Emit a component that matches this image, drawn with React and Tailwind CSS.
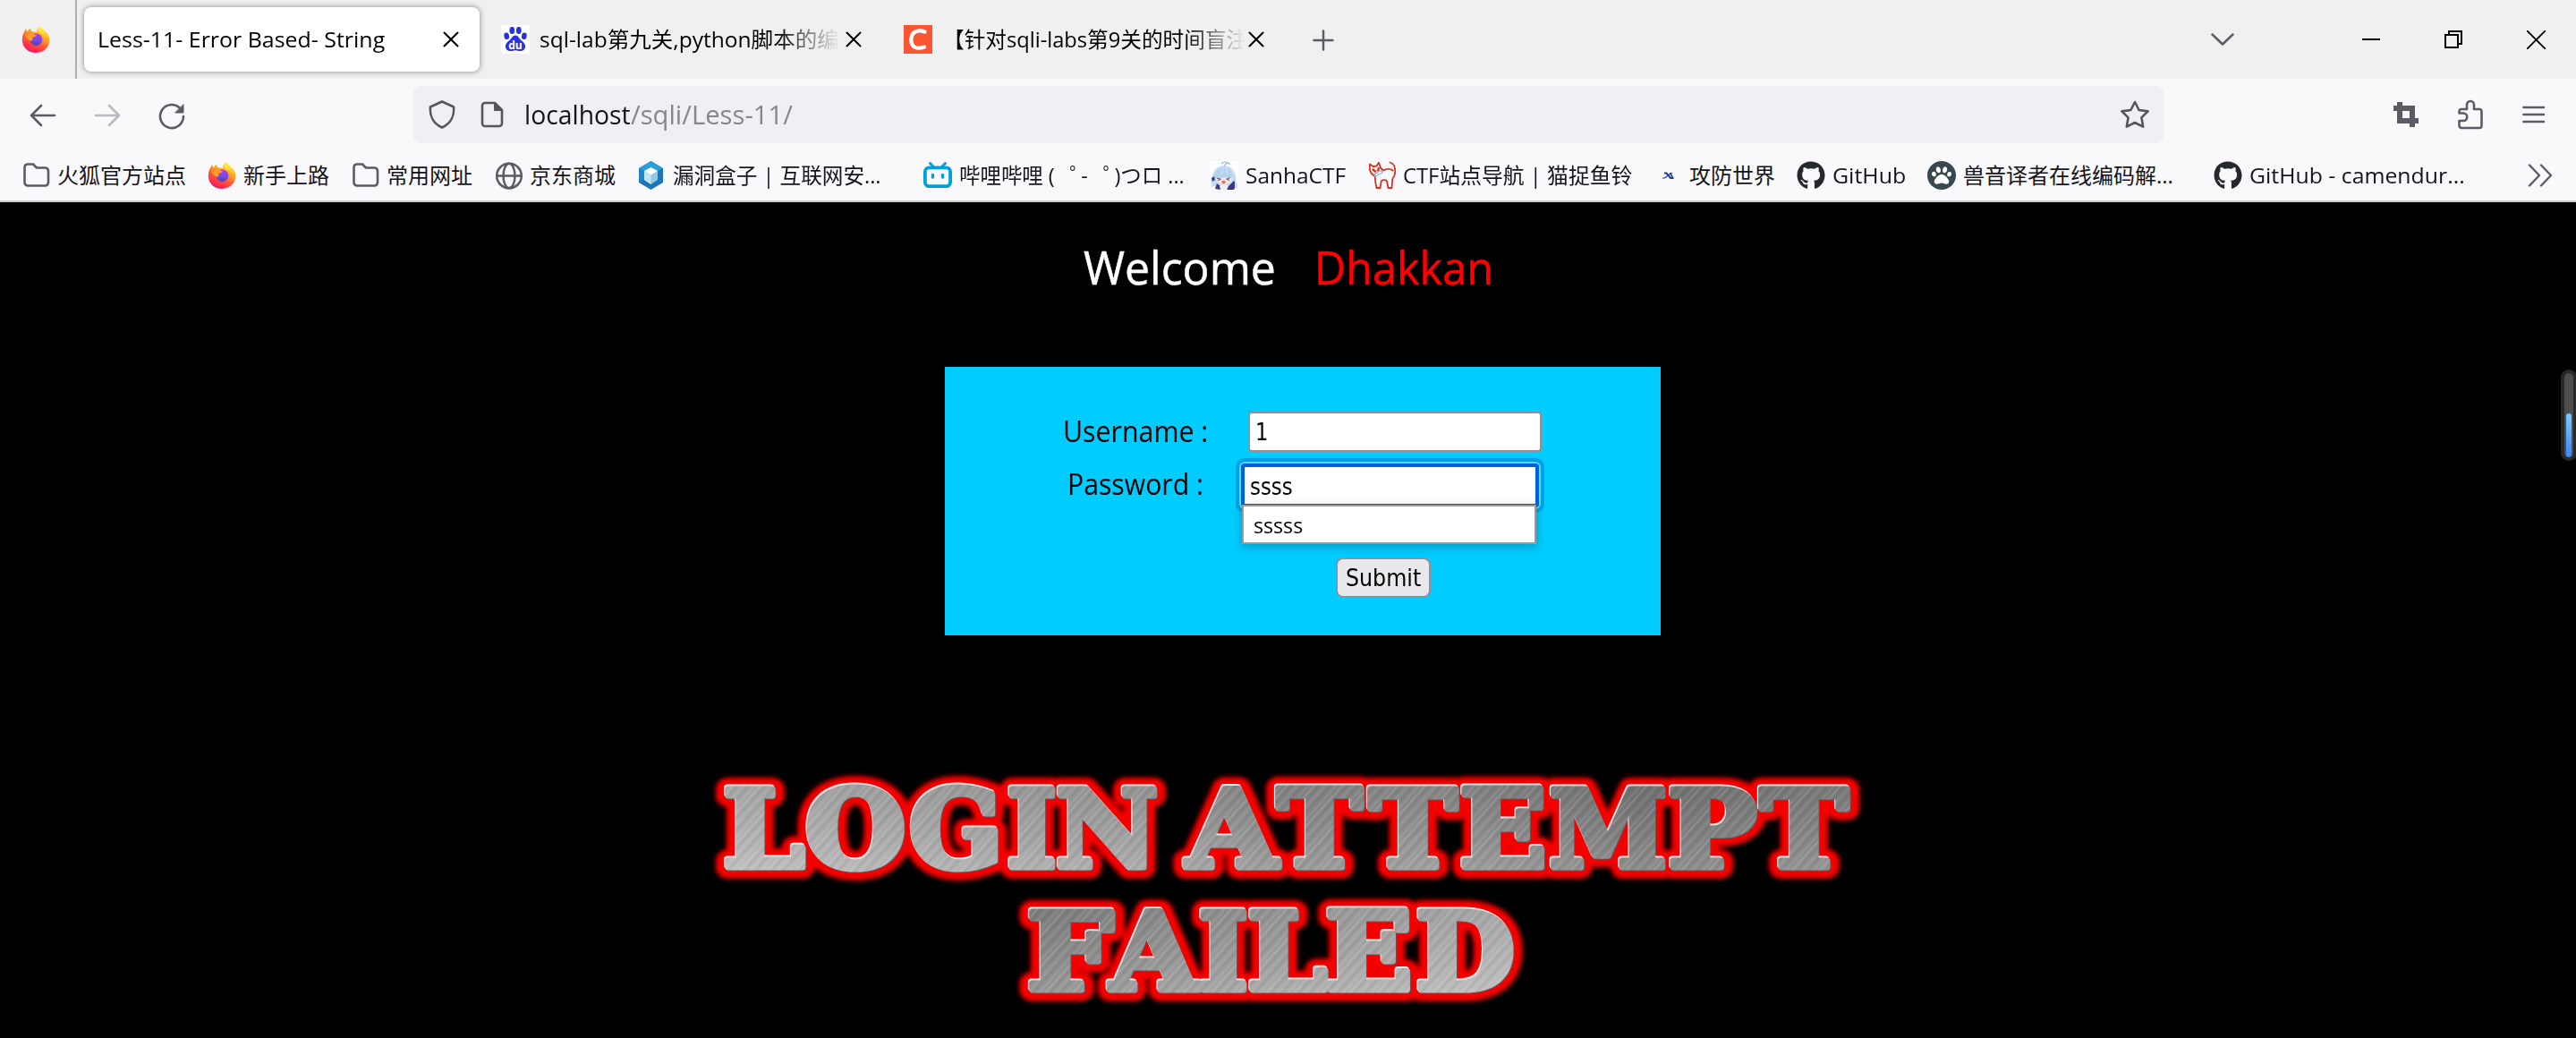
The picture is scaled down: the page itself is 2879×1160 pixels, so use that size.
import { useLayoutEffect, useRef, useState } from "react";
import { FaGithub, FaPaw } from "react-icons/fa";

const ui = "font-['Open_Sans','Noto_Sans_CJK_SC',sans-serif]";

// Text squeezed or stretched horizontally to an exact width.
function Fit({ w, className = "", children }) {
  const ref = useRef(null);
  const [s, setS] = useState(1);
  useLayoutEffect(() => {
    setS(w / ref.current.offsetWidth);
  }, [w]);
  return (
    <span className={`block shrink-0 whitespace-pre ${className}`} style={{ width: w }}>
      <span ref={ref} className="inline-block origin-left" style={{ transform: `scaleX(${s})` }}>
        {children}
      </span>
    </span>
  );
}

function Line({ className, d, w = 24, h = 24, sw = 2, vb, children }) {
  return (
    <svg className={`shrink-0 ${className}`} width={w} height={h} viewBox={vb || `0 0 ${w} ${h}`} fill="none" stroke="currentColor" strokeWidth={sw} strokeLinecap="round" strokeLinejoin="round">
      {d && <path d={d} />}
      {children}
    </svg>
  );
}

function Firefox() {
  return (
    <svg width="32" height="32" viewBox="0 0 32 32" className="shrink-0">
      <defs>
        <linearGradient id="ffBody" x1="0.8" y1="0.05" x2="0.3" y2="1">
          <stop offset="0" stopColor="#fff44f" />
          <stop offset="0.3" stopColor="#ffb020" />
          <stop offset="0.6" stopColor="#ff5a35" />
          <stop offset="0.85" stopColor="#ff2a50" />
          <stop offset="1" stopColor="#e31587" />
        </linearGradient>
        <linearGradient id="ffGlobe" x1="0.6" y1="0" x2="0.4" y2="1">
          <stop offset="0" stopColor="#b833e1" />
          <stop offset="0.5" stopColor="#7b4be8" />
          <stop offset="1" stopColor="#4d42a8" />
        </linearGradient>
        <linearGradient id="ffTail" x1="0.3" y1="0" x2="0.6" y2="1">
          <stop offset="0" stopColor="#fff44f" />
          <stop offset="0.6" stopColor="#ffcb2e" />
          <stop offset="1" stopColor="#ff9a2a" stopOpacity="0" />
        </linearGradient>
      </defs>
      <path fill="url(#ffBody)" d="M20.5 1C23 3 25.5 6 26.600 8.500L28.500 8.600C30.500 11.500 31.300 14 31.300 17C31.300 25 24.500 31 16 31C7.500 31 .8 25 .8 16.500C.8 12.500 2 8.500 4 6L4.300 4L6.800 7.200C8 5 9.500 3.500 9.800 3.300C10 5 11 6.500 12.500 7.500C14 7.300 16 7.400 17 7.700C17 5 18.500 2.500 20.500 1Z" />
      <circle cx="16.500" cy="16.200" r="6.800" fill="url(#ffGlobe)" />
      <path fill="#ff9a2a" d="M4.500 12C6 9.500 9 8.500 11.500 9.200L14 10.500C15 11 16.500 11 17.200 11.200C16.500 12.800 14 13.200 12.800 14C12 15 12 16.500 12.500 17.500C9 18 6 15.500 4.500 12Z" />
      <path fill="url(#ffTail)" d="M20.500 1C25 4.500 31.500 11 29.500 20C28 14 25 10 21 9C18.500 8 18 4 20.500 1Z" />
    </svg>
  );
}

const Folder = () => (
  <Line w={32} h={32} sw={2.600} className="text-[#5b5b66]" d="M7 3.500h6l4 4h9.500a3.500 3.500 0 0 1 3.500 3.500v13a3.500 3.500 0 0 1-3.500 3.500H7a3.500 3.500 0 0 1-3.500-3.500V7A3.500 3.500 0 0 1 7 3.500z" />
);

const Globe = () => (
  <Line w={32} h={32} sw={2.500} className="text-[#5b5b66]">
    <circle cx="17" cy="16.500" r="13.800" />
    <ellipse cx="17" cy="16.500" rx="6.500" ry="13.800" />
    <path d="M3.500 16.500h27" />
  </Line>
);

const Hexagon = () => (
  <svg width="32" height="32" viewBox="0 0 32 32" className="shrink-0">
    <path d="M15.500 0L29 8v16L15.500 32L2 24V8z" fill="#1b75b8" />
    <path d="M15.500 0L29 8l-6 3-7.500-4-7.500 4-6-3z" fill="#2b9fda" />
    <path d="M2 8l6 3v10l-6 3z" fill="#1f86c6" />
    <path d="M15.500 7l7.500 4v10l-7.500 5L8 21V11z" fill="#8ecbea" />
    <path d="M15.500 7l7.500 4-7.500 4.500L8 11z" fill="#fff" />
    <path d="M8 11l7.500 4.500V26L8 21z" fill="#c3e3f2" />
  </svg>
);

const Bilibili = () => (
  <svg width="32" height="32" viewBox="0 0 32 32" className="shrink-0" fill="none" stroke="#00a1d6" strokeLinecap="round">
    <path d="M7.500 2.500l4 4M24.500 2.500l-4 4" strokeWidth="3" />
    <rect x="1.900" y="7.400" width="28.200" height="20.700" rx="4.500" strokeWidth="3.800" />
    <path d="M10.500 15.500v2.500M21.500 15.500v2.500" strokeWidth="3.400" />
  </svg>
);

const Anime = () => (
  <svg width="32" height="32" viewBox="0 0 32 32" className="shrink-0">
    <rect width="32" height="32" fill="#fdfdff" />
    <path d="M2 28C2 14 5 6 16 5C27 6 30 14 30 29z" fill="#c3dcf4" />
    <path d="M13 3c3-3 8-2 9 0-3-1-5 0-6 3" fill="none" stroke="#9dbfe2" strokeWidth="1.200" />
    <path d="M7 19C7 14 12 12 16 12s8 2 8.500 7c0 4-4 7-8.500 7s-9-3-9-7z" fill="#fbe9e4" />
    <path d="M5 19c1-8 5-11 9-12l-2 9 5-8 3 8 1-8c3 3 5 6 5 10" fill="#b3d2f1" />
    <path d="M8 19l4 1.200-3 1.500M23 18.500l-4 1.500 3 1.500" fill="none" stroke="#6a5a78" strokeWidth="1.200" />
    <ellipse cx="15.500" cy="23.500" rx="2.200" ry="2" fill="#e0716c" />
    <path d="M6 31l2-6 4 3v4zM19 32l2-4 6-6 3 4-3 6z" fill="#3f3a80" />
    <path d="M11 28l4-2 5 1-1 5h-7z" fill="#eeeef8" />
    <path d="M1 20l4-1v7l-3 4zM28 21l3 5v5l-3-1z" fill="#cfe0f4" />
    <path d="M2 19l3-2 1 4-3 2z" fill="#3f3a80" />
  </svg>
);

const Cat = () => (
  <svg width="32" height="32" viewBox="0 0 32 32" className="shrink-0" fill="none" stroke="#d9301c" strokeWidth="1.800" strokeLinecap="round" strokeLinejoin="round">
    <path d="M3 3.500L7 6.200L10.500 5.500L13 1.800L15 7.500L18 10.500C21.500 8.500 26 8 28.500 10.500M3 3.500C2.500 7.500 2.500 11 4.500 13.500L9 17.500C8.500 22 9.500 26 10.500 30H14.500C15 27.500 15 24.500 16 22C18 20.500 21 20.800 22 22.500L23.500 30H27.500C28 26.500 27.500 23 28.500 19.500C31.500 16 31.500 12 31 9C30.800 5 29 2.500 25.500 1.500" />
    <path d="M6.500 9.500L9 11.500M13 8L11.800 10.500" strokeWidth="2.400" />
    <path d="M8 15l4-3 4-1.500 1 3-4 1-4 3z" stroke="#9aa7cf" strokeWidth="1.100" />
  </svg>
);

const Xctf = () => (
  <svg width="32" height="32" viewBox="0 0 32 32" className="shrink-0" fill="none" stroke="#1f3f8f">
    <path d="M12 13.500h2.500l4.500 5.500h3.500" strokeWidth="2" />
    <path d="M20.500 13l-8 6H10" strokeWidth="1.200" />
    <path d="M18.800 13l2.500 5.500" strokeWidth="1.800" />
  </svg>
);

const Github = () => <FaGithub className="size-8 shrink-0 text-[#24292e]" />;

const Paw = () => (
  <span className="flex size-8 shrink-0 items-center justify-center rounded-full bg-[#37474f]">
    <FaPaw className="size-[22px] text-white" />
  </span>
);

const Baidu = () => (
  <span className="flex size-8 shrink-0 items-center justify-center rounded-[4px] bg-white">
    <svg width="32" height="32" viewBox="0 0 32 32" fill="#2932e1">
      <ellipse cx="12.300" cy="6" rx="2.900" ry="4" />
      <ellipse cx="19.800" cy="6" rx="2.900" ry="4" />
      <ellipse cx="6.200" cy="12.300" rx="2.800" ry="3.800" transform="rotate(-12 6.200 12.300)" />
      <ellipse cx="25.800" cy="12.300" rx="2.800" ry="3.800" transform="rotate(12 25.800 12.300)" />
      <path d="M16 11.500c3 0 4 3 6 5s5.500 4 5 8c-.5 3.500-3 4.500-5.500 4.500-2 0-3.500-.8-5.500-.8s-3.500.8-5.500.8C8 29 5.500 28 5 24.500c-.5-4 3-6 5-8s3-5 6-5z" />
      <text x="16" y="26.500" textAnchor="middle" fontFamily="Open Sans, sans-serif" fontWeight="700" fontSize="12" fill="#fff">du</text>
    </svg>
  </span>
);

const Dot = () => <span className="-mr-[11px] ml-[11px]">゜</span>;

const bookmarks = [
  [Folder, "火狐官方站点", 144, 144],
  [Firefox, "新手上路", 96, 96],
  [Folder, "常用网址", 96, 96],
  [Globe, "京东商城", 96, 96],
  [Hexagon, "漏洞盒子 | 互联网安...", 233, 256],
  [Bilibili, <>哔哩哔哩 ( <Dot />- <Dot />)つロ ...</>, 252, 256],
  [Anime, "SanhaCTF", 112, 112],
  [Cat, "CTF站点导航 | 猫捉鱼铃", 256, 256],
  [Xctf, "攻防世界", 96, 96],
  [Github, "GitHub", 82, 82],
  [Paw, "兽音译者在线编码解...", 235, 256],
  [Github, "GitHub - camendur...", 241, 256],
];

const TabClose = () => <Line w={18} h={18} sw={2} className="text-black" d="M1.500 1.500l15 15M16.500 1.500l-15 15" />;

function TabStrip() {
  return (
    <div className="flex h-[88px] items-center bg-[#f0f0f0] text-[24px] leading-8 text-black">
      <div className="flex h-full w-[86px] items-center border-r-2 border-[#adadad] pl-6">
        <Firefox />
      </div>
      <div className="ml-2 flex h-[72px] w-[442px] items-center rounded-lg bg-white pl-[15px] shadow-[0_0_6px_rgba(0,0,0,0.45)]">
        <Fit w={321}>Less-11- Error Based- String</Fit>
        <span className="ml-[65px]"><TabClose /></span>
      </div>
      <div className="ml-6 flex items-center">
        <Baidu />
        <div className="ml-[11px] w-[336px] overflow-hidden [mask-image:linear-gradient(to_right,black_265px,transparent_336px)]">
          <Fit w={359}>sql-lab第九关,python脚本的编写</Fit>
        </div>
        <span className="ml-[6px]"><TabClose /></span>
      </div>
      <div className="ml-[47px] flex items-center">
        <span className="flex size-8 items-center justify-center bg-[#fc5531] text-white">
          <Line w={32} h={32} sw={4.200} className="text-white" d="M23.500 7.500C15 4.500 8.500 8 8.300 16.500C8.200 25 15 27.500 23 24.500" />
        </span>
        <div className="ml-[12px] w-[336px] overflow-hidden [mask-image:linear-gradient(to_right,black_270px,transparent_338px)]">
          <Fit w={340}>【针对sqli-labs第9关的时间盲注</Fit>
        </div>
        <span className="ml-[5px]"><TabClose /></span>
      </div>
      <Line className="ml-[54px] mt-[2px] text-[#5b5b66]" sw={2.500} d="M1.500 12h21M12 1.500v21" />
      <div className="ml-auto flex items-center pr-[34px]">
        <Line w={26} h={14} sw={2.500} className="mr-[143px] text-[#5b5b66]" d="M1.500 1.500L13 12.500L24.500 1.500" />
        <span className="mr-[72px] h-[2px] w-5 bg-black" />
        <svg width="20" height="20" viewBox="0 0 20 20" fill="none" stroke="black" strokeWidth="2" className="mr-[72px]">
          <path d="M1 5h14v14H1zM5 5V1h14v14h-4" />
        </svg>
        <Line w={21} h={21} sw={1.800} className="text-black" d="M.5 .5l20 20M20.500 .5l-20 20" />
      </div>
    </div>
  );
}

function NavBar() {
  return (
    <div className="flex h-[80px] items-center pr-[34px] text-[#5b5b66]">
      <Line w={30} h={26} sw={2.600} className="ml-[33px] mt-[2px]" d="M28 13H2M13 2L2 13l11 11" />
      <Line w={30} h={26} sw={2.600} className="ml-[42px] mt-[2px] opacity-40" d="M2 13h26M17 2l11 11-11 11" />
      <svg width="30" height="30" viewBox="0 0 30 30" className="ml-[42px] mt-[3px] shrink-0" fill="none" stroke="currentColor" strokeWidth="2.600" strokeLinecap="round">
        <path d="M28 15A13 13 0 1 1 23.500 5.200" />
        <path d="M28 2v9h-9z" fill="currentColor" stroke="currentColor" strokeWidth="1" />
      </svg>
      <div className="ml-[255px] flex h-16 w-[1956px] items-center rounded-lg bg-[#f0f0f4] pr-[15px]">
        <Line w={30} h={32} sw={2.600} className="ml-[17px] text-[#55555c]" d="M15 1.500L28 7.500C29 17 25 26 15 30.500C5 26 1 17 2 7.500z" />
        <svg width="26" height="30" viewBox="0 0 26 30" fill="none" stroke="#55555c" strokeWidth="2.600" strokeLinejoin="round" className="ml-[28px]">
          <path d="M5 2h11l8 8v15a3 3 0 0 1-3 3H5a3 3 0 0 1-3-3V5a3 3 0 0 1 3-3z" />
          <path d="M15.500 2v8.500H24z" fill="#55555c" strokeWidth="1" />
        </svg>
        <div className="ml-[23px] flex text-[30px] leading-[40px]">
          <Fit w={119} className="text-[#15141a]">localhost</Fit>
          <Fit w={181} className="text-[#87868c]">/sqli/Less-11/</Fit>
        </div>
        <Line w={34} h={32} sw={2.600} className="ml-auto text-[#55555c]" d="M17 2l4.600 9 10 1.400-7.200 7 1.800 10.300L17 25l-9.200 4.700 1.800-10.300-7.200-7 10-1.400z" />
      </div>
      <svg width="28" height="28" viewBox="0 0 28 28" className="ml-auto" fill="none" stroke="currentColor" strokeWidth="6">
        <path d="M0 7h21v16M28 21H7V0" />
        <path d="M21 21v7" />
      </svg>
      <Line w={28} h={34} sw={2.600} className="ml-[44px]" d="M4 11h6V6a4 4 0 0 1 8 0v5h6a2.500 2.500 0 0 1 2.500 2.500v16A2.500 2.500 0 0 1 24 32H4a2.500 2.500 0 0 1-2.500-2.500V24H6a4 4 0 0 0 0-8.500H1.500v-2A2.500 2.500 0 0 1 4 11z" />
      <Line w={26} h={20} sw={2.600} className="ml-[44px]" d="M1.500 2h22.500M1.500 10h22.500M1.500 18h22.500" />
    </div>
  );
}

function Bookmarks() {
  return (
    <div className="flex h-[56px] items-center gap-6 pl-6 text-[24px] leading-8 text-[#15141a]">
      {bookmarks.map(([Icon, text, w, box], i) => (
        <div key={i} className="flex shrink-0 items-center gap-2">
          <Icon />
          <div className="shrink-0" style={{ width: box }}>
            <Fit w={w}>{text}</Fit>
          </div>
        </div>
      ))}
      <Line w={28} h={26} sw={2.400} className="ml-[31px] text-[#5b5b66]" d="M2 1.500L13 13L2 24.500M15 1.500L26 13L15 24.500" />
    </div>
  );
}

// [character, left edge, right edge, baseline]
const banner = [
  ["L", 810, 901, 972], ["O", 902, 1011, 972], ["G", 1018, 1116, 972], ["I", 1127, 1180, 972], ["N", 1182, 1294, 972],
  ["A", 1322, 1433, 972], ["T", 1425, 1525, 972], ["T", 1528, 1631, 972], ["E", 1633, 1726, 972], ["M", 1733, 1862, 972], ["P", 1866, 1964, 972], ["T", 1965, 2068, 972],
  ["F", 1150, 1246, 1109], ["A", 1237, 1344, 1109], ["I", 1341, 1394, 1109], ["L", 1396, 1485, 1109], ["E", 1483, 1576, 1109], ["D", 1584, 1692, 1109],
];

function Banner() {
  const [glyphs, setGlyphs] = useState([]);
  useLayoutEffect(() => {
    const ctx = document.createElement("canvas").getContext("2d");
    ctx.font = "bold 119px 'DejaVu Serif'";
    setGlyphs(
      banner.map(([ch, l, r, b]) => {
        const m = ctx.measureText(ch);
        const left = -m.actualBoundingBoxLeft;
        const s = (r - l - 7) / (m.actualBoundingBoxRight - left);
        return { ch, t: `translate(${l + 3.5 - left * s - 780} ${b - 3.5 - 850}) scale(${s} 1)` };
      })
    );
  }, []);
  const layer = (props) => (
    <g {...props}>
      {glyphs.map((g, i) => (
        <text key={i} transform={g.t}>{g.ch}</text>
      ))}
    </g>
  );
  return (
    <svg width="1320" height="310" viewBox="0 0 1320 310" fontFamily="DejaVu Serif" fontWeight="700" fontSize="119" strokeLinejoin="round" className="mt-[140px] ml-[780px] shrink-0">
      <defs>
        <linearGradient id="shade" x1="0" x2="1320" y1="0" y2="0" gradientUnits="userSpaceOnUse">
          <stop offset="0" stopColor="#b8b8b8" />
          <stop offset="0.25" stopColor="#a6a6a6" />
          <stop offset="0.38" stopColor="#a0a0a0" />
          <stop offset="0.5" stopColor="#8c8c8c" />
          <stop offset="0.62" stopColor="#929292" />
          <stop offset="0.8" stopColor="#7a7a7a" />
          <stop offset="1" stopColor="#868686" />
        </linearGradient>
        <linearGradient id="shade2" x1="360" x2="920" y1="0" y2="0" gradientUnits="userSpaceOnUse">
          <stop offset="0" stopColor="#868686" />
          <stop offset="0.5" stopColor="#a0a0a0" />
          <stop offset="1" stopColor="#bababa" />
        </linearGradient>
        <linearGradient id="lift" x1="0" x2="0" y1="0" y2="1">
          <stop offset="0" stopColor="#000" stopOpacity="0.100" />
          <stop offset="1" stopColor="#fff" stopOpacity="0.140" />
        </linearGradient>
        <pattern id="brush" width="23" height="40" patternUnits="userSpaceOnUse" patternTransform="rotate(42)">
          <rect x="1" width="2" height="40" fill="#fff" opacity="0.130" />
          <rect x="5" width="1.500" height="40" fill="#000" opacity="0.070" />
          <rect x="9" width="3" height="40" fill="#fff" opacity="0.070" />
          <rect x="14" width="2" height="40" fill="#000" opacity="0.060" />
          <rect x="19" width="1.500" height="40" fill="#fff" opacity="0.110" />
        </pattern>
        <filter id="glow" x="-5%" y="-10%" width="110%" height="120%">
          <feGaussianBlur stdDeviation="2.800" />
        </filter>
        <mask id="letters" maskUnits="userSpaceOnUse" x="0" y="0" width="1320" height="310">
          {layer({ fill: "#fff", stroke: "#fff", strokeWidth: 7 })}
        </mask>
      </defs>
      {layer({ fill: "#f40000", stroke: "#f40000", strokeWidth: 26, filter: "url(#glow)" })}
      {layer({ fill: "#6a5050", stroke: "#6a5050", strokeWidth: 7, transform: "translate(1 1)" })}
      {layer({ fill: "#f4e4e4", stroke: "#f4e4e4", strokeWidth: 7, transform: "translate(-1.200 -1.500)" })}
      <g mask="url(#letters)">
        <rect width="1320" height="145" fill="url(#shade)" />
        <rect y="145" width="1320" height="165" fill="url(#shade2)" />
        <rect y="24" width="1320" height="100" fill="url(#lift)" />
        <rect y="162" width="1320" height="100" fill="url(#lift)" />
        <rect width="1320" height="310" fill="url(#brush)" />
      </g>
    </svg>
  );
}

export default function App() {
  return (
    <div className={`flex h-[1160px] w-[2879px] flex-col overflow-hidden bg-black ${ui}`}>
      <TabStrip />
      <div className="h-[138px] shrink-0 border-b-2 border-[#cccccf] bg-[#f9f9fb]">
        <NavBar />
        <Bookmarks />
      </div>
      <div className="relative flex grow flex-col">
        <div className="mt-[36px] ml-[1211px] flex h-[72px] text-[52px] leading-[71px]">
          <Fit w={215} className="text-white [-webkit-text-stroke:0.5px_white]">Welcome</Fit>
          <Fit w={200} className="ml-[43px] text-[#ff0000] [-webkit-text-stroke:0.5px_red]">Dhakkan</Fit>
        </div>
        <div className="mt-[76px] ml-[1056px] h-[300px] w-[800px] shrink-0 bg-[#00ccff] pt-[50px] text-[32px] leading-[43px] text-black">
          <div className="flex h-[45px]">
            <Fit w={162} className="ml-[132px]">Username :</Fit>
            <div className="ml-[45px] h-[45px] w-[328px] rounded-[4px] border-2 border-[#8f8f9d] bg-white pl-[6px] text-[27px] leading-[42px]">
              <Fit w={14} className="font-['DejaVu_Sans_Condensed','DejaVu_Sans',sans-serif]">1</Fit>
            </div>
          </div>
          <div className="mt-[13px] flex h-[49px]">
            <Fit w={152} className="ml-[137px] pt-[1px]">Password :</Fit>
            <div className="relative ml-[42px] h-[49px] w-[333px] rounded-[4px] border-4 border-[#0060df] bg-white pl-[6px] text-[27px] leading-[43px] outline-[4px] outline-offset-2 outline-[#009fe8] ring-2 ring-[#4fdcff]">
              <Fit w={48} className="font-['DejaVu_Sans_Condensed','Noto_Sans',sans-serif]">ssss</Fit>
              <div className="absolute -left-[3px] top-[42px] h-[44px] w-[329px] border-2 border-[#9a9a9a] bg-white pl-[11px] text-[24px] leading-[41px] shadow-[0_3px_10px_rgba(0,0,0,0.25)]">
                <Fit w={55} className="font-['Open_Sans',sans-serif]">sssss</Fit>
              </div>
            </div>
          </div>
          <div className="mt-[56px] ml-[437px] flex h-[45px] w-[106px] justify-center rounded-[8px] border-2 border-[#8f8f9d] bg-[#e9e9ed] text-[27px] leading-[41px]">
            <Fit w={84} className="font-['DejaVu_Sans_Condensed','Noto_Sans',sans-serif]">Submit</Fit>
          </div>
        </div>
        <Banner />
        <div className="absolute top-[187px] left-[2862px] flex h-[102px] w-[18px] items-end rounded-l-[9px] rounded-r-[9px] border-4 border-[#282828] bg-[#4d4d4d] pl-[2px]">
          <div className="h-[49px] w-[6px] rounded-full bg-gradient-to-b from-[#7cc8ff] to-[#3a86ff]" />
        </div>
      </div>
    </div>
  );
}
